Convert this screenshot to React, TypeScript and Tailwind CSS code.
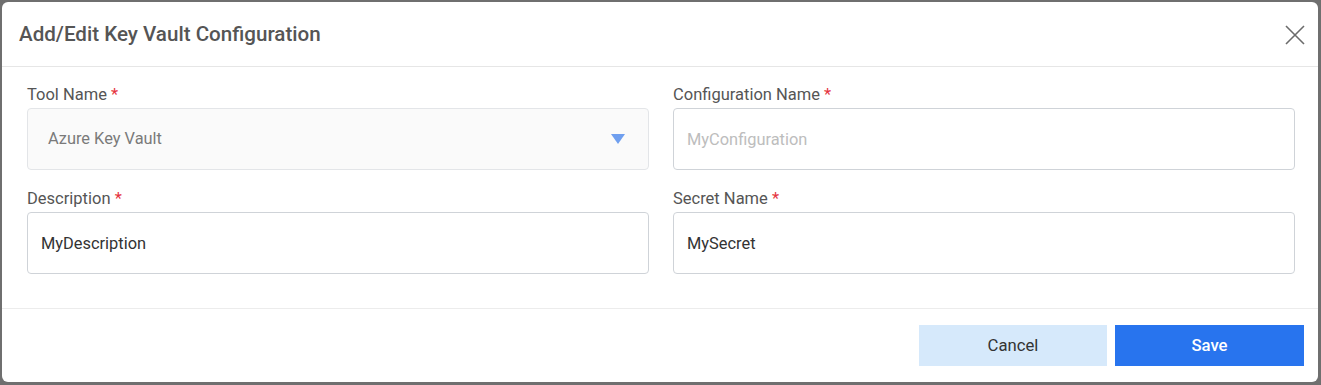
interface FieldProps {
    label: string
    children: React.ReactNode
}

function Field({ label, children }: FieldProps) {
    return (
        <div className="flex flex-col">
            <label className="text-[16.5px] leading-[20px] text-[#555] mb-[3px]">
                {label} <span className="text-[#e5343d]">*</span>
            </label>
            {children}
        </div>
    )
}

export default function App() {
    return (
        <div className="w-[1321px] h-[385px] bg-[#6f6f6f] pt-[2px] pl-[2px] font-['Roboto',sans-serif]">
            <div className="w-[1316px] h-[380px] bg-white rounded-[6px] flex flex-col overflow-hidden">
                <div className="h-[65px] flex items-center justify-between pl-[17px] pr-[13px] border-b border-[#e6e6e6]">
                    <h1 className="text-[20.6px] font-medium text-[#555]">
                        Add/Edit Key Vault Configuration
                    </h1>
                    <svg width="20" height="20" viewBox="0 0 20 20" className="mt-[2px]">
                        <path d="M1 1 L19 19 M19 1 L1 19" stroke="#6b6b6b" strokeWidth="1.6" />
                    </svg>
                </div>

                <div className="grid grid-cols-2 content-start gap-x-[24px] gap-y-[19px] pl-[25px] pr-[23px] pt-[18px] h-[242px] border-b border-[#ececec]">
                    <Field label="Tool Name">
                        <div className="h-[62px] rounded-[4px] border border-[#e3e5e8] bg-[#fafafa] flex items-center justify-between pl-[20px] pr-[23px]">
                            <span className="text-[16.4px] text-[#7a7a7a]">Azure Key Vault</span>
                            <svg width="14" height="10" viewBox="0 0 14 10">
                                <polygon points="0,0 14,0 7,10" fill="#6f9fef" />
                            </svg>
                        </div>
                    </Field>
                    <Field label="Configuration Name">
                        <input
                            className="h-[62px] rounded-[4px] border border-[#cfd3d8] px-[13px] text-[16.4px] text-[#333] placeholder:text-[#bdbdbd] outline-none"
                            placeholder="MyConfiguration"
                        />
                    </Field>
                    <Field label="Description">
                        <input
                            className="h-[62px] rounded-[4px] border border-[#cfd3d8] px-[13px] text-[16.4px] text-[#333] outline-none"
                            defaultValue="MyDescription"
                        />
                    </Field>
                    <Field label="Secret Name">
                        <input
                            className="h-[62px] rounded-[4px] border border-[#cfd3d8] px-[13px] text-[16.4px] text-[#333] outline-none"
                            defaultValue="MySecret"
                        />
                    </Field>
                </div>

                <div className="flex-1 flex items-center justify-end gap-[8px] pr-[14px]">
                    <button className="w-[188px] h-[41px] bg-[#d6e9fb] text-[16.7px] text-[#333]">Cancel</button>
                    <button className="w-[189px] h-[41px] bg-[#2874ee] text-[16.7px] font-medium text-white">Save</button>
                </div>
            </div>
        </div>
    )
}
